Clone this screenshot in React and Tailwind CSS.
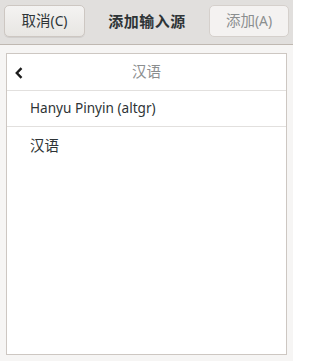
export default function App() {
  const font = { fontFamily: '"Noto Sans", "Noto Sans CJK SC", sans-serif' }
  return (
    <div className="w-[293px] h-[361px] bg-[#f6f5f4] flex flex-col overflow-hidden" style={font}>
      <div className="h-[45px] shrink-0 bg-[#e1dfdd] border-b border-[#bfb8b1] flex items-start justify-between px-[4px] pt-[5px]">
        <button className="w-[81px] h-[32px] rounded-[5px] border border-[#cdc7c2] bg-gradient-to-b from-[#f4f3f2] to-[#e8e6e3] text-[14.5px] text-[#2e3436] flex items-center justify-center shadow-[0_1px_0_rgba(0,0,0,0.07)]">
          取消<span className="text-[13.8px]">(C)</span>
        </button>
        <div className="h-[32px] flex items-center text-[15px] font-bold text-[#2e3436] tracking-[0.5px]">添加输入源</div>
        <button className="w-[80px] h-[32px] rounded-[5px] border border-[#d5d0cc] bg-[#f4f2f1] text-[14.5px] text-[#8b8e8f] flex items-center justify-center">
          添加<span className="text-[13.8px]">(A)</span>
        </button>
      </div>
      <div className="flex-1 px-[6px] pt-[8px] pb-[6px] flex">
        <div className="flex-1 bg-white border border-[#cdc7c2] flex flex-col">
          <div className="h-[37px] shrink-0 border-b border-[#e2e0de] flex items-center relative">
            <svg className="absolute left-[7px] top-[13px]" width="10" height="12" viewBox="0 0 10 12">
              <path d="M7.5 1.2 L2.8 6 L7.5 10.8" fill="none" stroke="#1c1c1c" strokeWidth="2.4" />
            </svg>
            <div className="flex-1 text-center text-[14.5px] text-[#8b8e8f]">汉语</div>
          </div>
          <div className="h-[36px] shrink-0 border-b border-[#e2e0de] flex items-center pl-[23px] text-[13.6px] text-[#2e3436]">
            Hanyu Pinyin (altgr)
          </div>
          <div className="h-[38px] shrink-0 flex items-center pl-[23px] text-[14.5px] text-[#2e3436]">汉语</div>
        </div>
      </div>
    </div>
  )
}
